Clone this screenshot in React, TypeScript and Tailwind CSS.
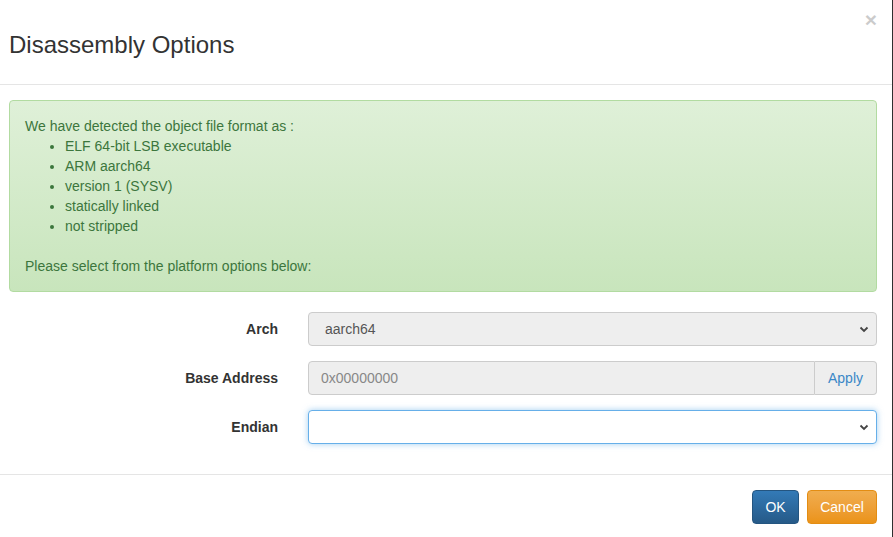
import React from "react";

const Chevron = () => (
  <svg
    className="pointer-events-none absolute right-[8px] top-1/2 -translate-y-1/2"
    width="10"
    height="10"
    viewBox="0 0 10 10"
  >
    <path d="M1.5 3.5 L5 7 L8.5 3.5" fill="none" stroke="#444" strokeWidth="1.8" />
  </svg>
);

const Row = ({ label, children }: { label: string; children: React.ReactNode }) => (
  <div className="flex items-center gap-[30px] mb-[15px]">
    <label className="w-[269px] text-right font-bold text-[14px] text-[#333]">{label}</label>
    <div className="flex-1">{children}</div>
  </div>
);

const App = () => {
  return (
    <div className="flex w-[893px] h-[537px] overflow-hidden bg-white font-['Liberation_Sans',Arial,sans-serif] text-[14px] leading-[20px] text-[#333]">
      <div className="w-[892px] flex flex-col">
        {/* header */}
        <div className="relative shrink-0 h-[85px] border-b border-[#e5e5e5] pl-[9px] pt-[33px]">
          <h4 className="text-[24px] leading-[24px] text-[#333]">Disassembly Options</h4>
          <button
            type="button"
            className="absolute right-[15px] top-[8px] text-[21px] font-bold leading-[24px] text-black opacity-20"
          >
            ×
          </button>
        </div>

        {/* body */}
        <div className="shrink-0 pt-[15px] pb-[15px] pl-[9px] pr-[15px]">
          <div className="mb-[20px] rounded-[4px] border border-[#b2dba1] bg-gradient-to-b from-[#dff0d8] to-[#c8e5bc] px-[15px] py-[15px] text-[#3c763d]">
            <div>We have detected the object file format as :</div>
            <ul className="list-disc pl-[40px] mb-[20px]">
              <li>ELF 64-bit LSB executable</li>
              <li>ARM aarch64</li>
              <li>version 1 (SYSV)</li>
              <li>statically linked</li>
              <li>not stripped</li>
            </ul>
            <div>Please select from the platform options below:</div>
          </div>

          <Row label="Arch">
            <div className="relative">
              <select
                disabled
                className="w-full h-[34px] appearance-none rounded-[4px] border border-[#ccc] bg-[#eee] px-[16px] text-[14px] text-[#555]"
              >
                <option>aarch64</option>
              </select>
              <Chevron />
            </div>
          </Row>

          <Row label="Base Address">
            <div className="flex h-[34px]">
              <input
                disabled
                placeholder="0x00000000"
                className="flex-1 min-w-0 rounded-l-[4px] border border-[#ccc] bg-[#eee] px-[12px] text-[14px] placeholder:text-[#888]"
              />
              <button
                type="button"
                className="w-[62px] rounded-r-[4px] border border-l-0 border-[#ccc] bg-[#eee] text-[14px] text-[#3a87c7]"
              >
                Apply
              </button>
            </div>
          </Row>

          <Row label="Endian">
            <div className="relative">
              <select className="w-full h-[34px] appearance-none rounded-[4px] border border-[#66afe9] bg-white px-[12px] text-[14px] text-[#555] shadow-[0_0_6px_rgba(102,175,233,0.6)] outline-none">
                <option></option>
              </select>
              <Chevron />
            </div>
          </Row>
        </div>

        {/* footer */}
        <div className="border-t border-[#e5e5e5] flex justify-end gap-[8px] pt-[15px] pr-[15px]">
          <button
            type="button"
            className="h-[34px] w-[47px] rounded-[4px] border border-[#245580] bg-gradient-to-b from-[#337ab7] to-[#265a88] text-[14px] text-white"
          >
            OK
          </button>
          <button
            type="button"
            className="h-[34px] w-[70px] rounded-[4px] border border-[#e38d13] bg-gradient-to-b from-[#f0ad4e] to-[#eb9316] text-[14px] text-white"
          >
            Cancel
          </button>
        </div>
      </div>
      <div className="w-px bg-[#2f2f2f]" />
    </div>
  );
};

export default App;
